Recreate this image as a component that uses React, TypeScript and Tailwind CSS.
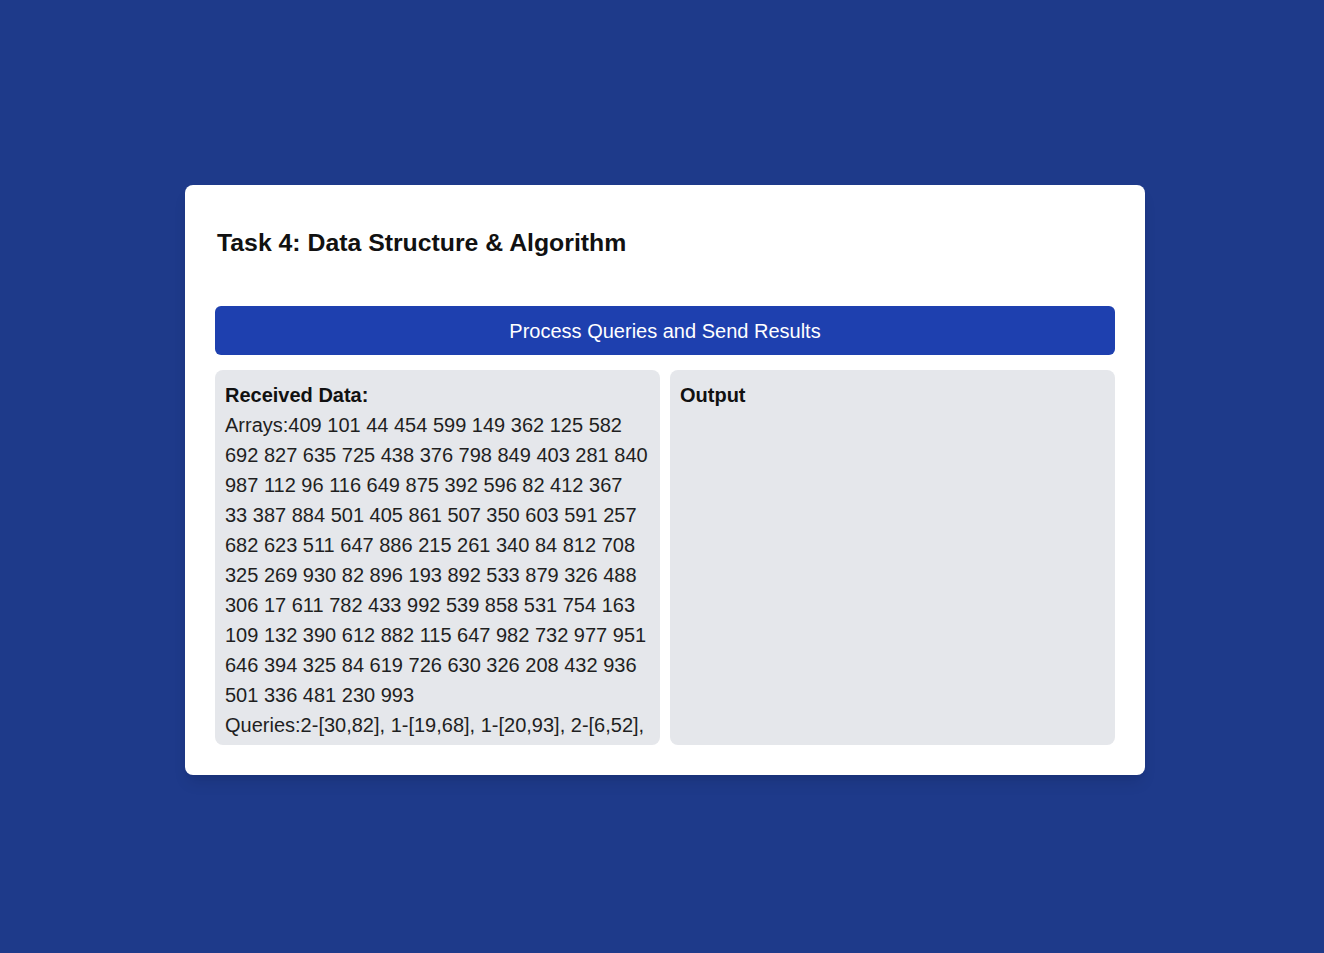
import React from "react";

export default function App() {
  const arrays =
    "409 101 44 454 599 149 362 125 582 692 827 635 725 438 376 798 849 403 281 840 987 112 96 116 649 875 392 596 82 412 367 33 387 884 501 405 861 507 350 603 591 257 682 623 511 647 886 215 261 340 84 812 708 325 269 930 82 896 193 892 533 879 326 488 306 17 611 782 433 992 539 858 531 754 163 109 132 390 612 882 115 647 982 732 977 951 646 394 325 84 619 726 630 326 208 432 936 501 336 481 230 993";
  const queries = "2-[30,82], 1-[19,68], 1-[20,93], 2-[6,52],";
  return (
    <div
      className="min-h-screen w-full bg-[#1e3a8a] flex items-center justify-center pl-[6px] pt-[7px]"
      style={{ fontFamily: '"Liberation Sans", Arial, sans-serif' }}
    >
      <div className="w-[960px] h-[590px] bg-white rounded-lg shadow-lg p-[30px] flex flex-col">
        <h2 className="text-[24.8px] leading-8 font-bold text-[#111111] mt-[12px] mb-[47px] pl-[2px]">
          Task 4: Data Structure &amp; Algorithm
        </h2>
        <button className="w-full h-[50px] bg-[#1e40af] text-white text-[20px] rounded-md flex items-center justify-center">
          Process Queries and Send Results
        </button>
        <div className="grid grid-cols-2 gap-[10px] mt-[15px]">
          <div className="h-[375px] bg-[#e5e7eb] rounded-lg p-[10px] overflow-hidden text-[20px] leading-[30px] text-[#1f1f1f]">
            <div className="font-bold text-[#111111]">Received Data:</div>
            <div>Arrays:{arrays}</div>
            <div>Queries:{queries}</div>
          </div>
          <div className="h-[375px] bg-[#e5e7eb] rounded-lg p-[10px] overflow-hidden text-[20px] leading-[30px] text-[#1f1f1f]">
            <div className="font-bold text-[#111111]">Output</div>
          </div>
        </div>
      </div>
    </div>
  );
}
